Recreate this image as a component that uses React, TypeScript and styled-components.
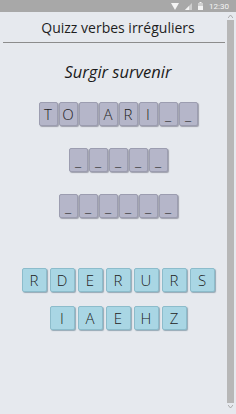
import React from "react";
import styled, { createGlobalStyle } from "styled-components";

const GlobalStyle = createGlobalStyle`
  html, body {
    margin: 0;
    padding: 0;
    background: #e6e9ee;
  }
  body {
    font-family: "Open Sans", "Liberation Sans", sans-serif;
  }
`;

const Screen = styled.div`
  position: relative;
  width: 236px;
  height: 414px;
  overflow: hidden;
  background: #e6e9ee;
  display: flex;
  flex-direction: column;
`;

const StatusBar = styled.div`
  height: 12px;
  background: #a8a8a8;
  display: flex;
  align-items: center;
  justify-content: flex-end;
  gap: 6px;
  padding-right: 7px;
  color: #f4f4f4;
  font-family: "Roboto", sans-serif;
  font-size: 8px;
`;

const Header = styled.div`
  height: 30px;
  margin: 0 11px 0 3px;
  border-bottom: 1px solid #8c8c8c;
  display: flex;
  align-items: center;
  justify-content: center;
  padding-left: 8px;
  font-size: 14px;
  color: #1e1e1e;
`;

const Content = styled.div`
  display: flex;
  flex-direction: column;
  align-items: center;
  padding-top: 18px;
`;

const Prompt = styled.div`
  font-size: 16.5px;
  font-style: italic;
  line-height: 22px;
  color: #1a1a1a;
  margin-bottom: 19px;
`;

const Row = styled.div<{ $gap: number; $mb: number }>`
  display: flex;
  gap: ${(p) => p.$gap}px;
  margin-bottom: ${(p) => p.$mb}px;
`;

const Tile = styled.div<{ $kind: "answer" | "pick" }>`
  box-sizing: border-box;
  width: ${(p) => (p.$kind === "answer" ? 19 : 25)}px;
  height: 24px;
  border-radius: 2px;
  background: ${(p) => (p.$kind === "answer" ? "#b5b6c9" : "#a9d6e4")};
  border: 1px solid ${(p) => (p.$kind === "answer" ? "#9c9db0" : "#8cbccb")};
  box-shadow: 1px 1px 1px
    ${(p) => (p.$kind === "answer" ? "rgba(70,70,90,0.45)" : "rgba(50,90,110,0.45)")};
  display: flex;
  align-items: center;
  justify-content: center;
  font-size: 15px;
  font-weight: 300;
  color: #222;
  line-height: 1;
`;

const ScrollTrack = styled.div`
  position: absolute;
  top: 13px;
  right: 2px;
  bottom: 4px;
  width: 7px;
  display: flex;
  flex-direction: column;
  align-items: center;
`;

const Arrow = styled.div`
  height: 7px;
  display: flex;
  align-items: center;
  justify-content: center;
`;

const Thumb = styled.div`
  flex: 1;
  width: 7px;
  background: #b7b7b7;
`;

const answerRows: string[][] = [
  ["T", "O", "", "A", "R", "I", "_", "_"],
  ["_", "_", "_", "_", "_"],
  ["_", "_", "_", "_", "_", "_"],
];

const pickRows: string[][] = [
  ["R", "D", "E", "R", "U", "R", "S"],
  ["I", "A", "E", "H", "Z"],
];

const App: React.FC = () => {
  return (
    <>
      <GlobalStyle />
      <Screen>
        <StatusBar>
          <svg width="8" height="7" viewBox="0 0 8 7">
            <path d="M0 0 H8 L4 7 Z" fill="#f4f4f4" />
          </svg>
          <svg width="7" height="7" viewBox="0 0 7 7">
            <path d="M7 0 V7 H0 Z" fill="#cfcfcf" />
            <path d="M4 3 V7 H0 Z" fill="#f4f4f4" />
          </svg>
          <svg width="5" height="8" viewBox="0 0 5 8">
            <rect x="1.5" y="0" width="2" height="1" fill="#f4f4f4" />
            <rect x="0" y="1" width="5" height="7" fill="#d0d0d0" />
            <rect x="0" y="4" width="5" height="4" fill="#f4f4f4" />
          </svg>
          <span>12:30</span>
        </StatusBar>
        <Header>Quizz verbes irréguliers</Header>
        <Content>
          <Prompt>Surgir survenir</Prompt>
          {answerRows.map((row, i) => (
            <Row key={i} $gap={1} $mb={i === 2 ? 50 : 22}>
              {row.map((c, j) => (
                <Tile key={j} $kind="answer">
                  {c}
                </Tile>
              ))}
            </Row>
          ))}
          {pickRows.map((row, i) => (
            <Row key={i} $gap={3} $mb={14}>
              {row.map((c, j) => (
                <Tile key={j} $kind="pick">
                  {c}
                </Tile>
              ))}
            </Row>
          ))}
        </Content>
        <ScrollTrack>
          <Arrow>
            <svg width="5" height="3" viewBox="0 0 5 3">
              <path d="M0 3 L2.5 0 L5 3" fill="none" stroke="#9a9a9a" strokeWidth="0.8" />
            </svg>
          </Arrow>
          <Thumb />
          <Arrow>
            <svg width="5" height="3" viewBox="0 0 5 3">
              <path d="M0 0 L2.5 3 L5 0" fill="none" stroke="#9a9a9a" strokeWidth="0.8" />
            </svg>
          </Arrow>
        </ScrollTrack>
      </Screen>
    </>
  );
};

export default App;
